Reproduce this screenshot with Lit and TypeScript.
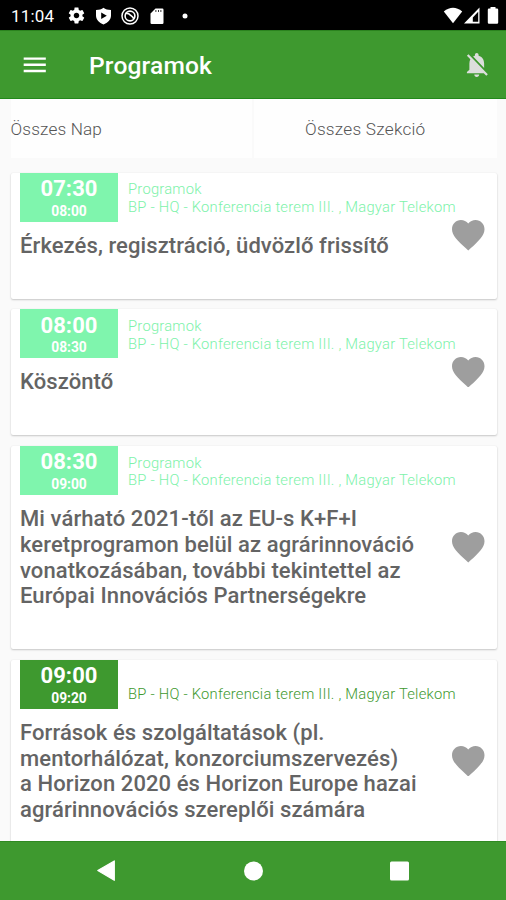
import { LitElement, html, css, nothing } from "lit";
import { customElement, property } from "lit/decorators.js";

interface Session {
  start: string;
  end: string;
  category?: string;
  place: string;
  lines: string[];
  past: boolean;
}

const PLACE = "BP - HQ - Konferencia terem III. , Magyar Telekom";

const SESSIONS: Session[] = [
  { start: "07:30", end: "08:00", category: "Programok", place: PLACE, past: true,
    lines: ["Érkezés, regisztráció, üdvözlő frissítő"] },
  { start: "08:00", end: "08:30", category: "Programok", place: PLACE, past: true,
    lines: ["Köszöntő"] },
  { start: "08:30", end: "09:00", category: "Programok", place: PLACE, past: true,
    lines: ["Mi várható 2021-től az EU-s K+F+I", "keretprogramon belül az agrárinnováció", "vonatkozásában, további tekintettel az", "Európai Innovációs Partnerségekre"] },
  { start: "09:00", end: "09:20", place: PLACE, past: false,
    lines: ["Források és szolgáltatások (pl.", "mentorhálózat, konzorciumszervezés)", "a Horizon 2020 és Horizon Europe hazai", "agrárinnovációs szereplői számára"] },
];

@customElement("status-bar")
class StatusBar extends LitElement {
  static styles = css`
    :host { display: flex; align-items: center; height: 30px; box-sizing: border-box; padding: 1px 7px 0 11px; background: #000; color: #fff; }
    .clock { width: 55.500px; font-size: 17px; line-height: 20px; letter-spacing: 0.2px; }
    .icons { display: flex; align-items: center; gap: 9.300px; }
    .spacer { flex: 1; }
    svg { display: block; fill: currentColor; }
    .signal { margin-left: 0.500px; }
    .battery { margin-left: 7.500px; }
  `;
  render() {
    return html`
      <span class="clock">11:04</span>
      <div class="icons">
        <svg width="19" height="19" viewBox="0 0 24 24"><path d="M19.43 12.98c.04-.32.07-.64.07-.98s-.03-.66-.07-.98l2.11-1.65c.19-.15.24-.42.12-.64l-2-3.46c-.12-.22-.39-.3-.61-.22l-2.49 1c-.52-.4-1.08-.73-1.69-.98l-.38-2.65C14.46 2.18 14.25 2 14 2h-4c-.25 0-.46.18-.49.42l-.38 2.65c-.61.25-1.17.59-1.69.98l-2.49-1c-.23-.09-.49 0-.61.22l-2 3.46c-.13.22-.07.49.12.64l2.11 1.65c-.04.32-.07.65-.07.98s.03.66.07.98l-2.11 1.65c-.19.15-.24.42-.12.64l2 3.46c.12.22.39.3.61.22l2.49-1c.52.4 1.08.73 1.69.98l.38 2.65c.03.24.24.42.49.42h4c.25 0 .46-.18.49-.42l.38-2.65c.61-.25 1.17-.59 1.69-.98l2.49 1c.23.09.49 0 .61-.22l2-3.46c.12-.22.07-.49-.12-.64l-2.11-1.65zM12 15.5c-1.93 0-3.5-1.57-3.5-3.5s1.57-3.5 3.5-3.5 3.5 1.57 3.5 3.5-1.57 3.5-3.5 3.5z"/></svg>
        <svg width="17" height="18" viewBox="0 0 17 18"><path fill-rule="evenodd" d="M8.500 .7C10.300 2.200 13 2.900 16 3V8.500C16 12.700 12.700 16 8.500 17.400 4.300 16 1 12.700 1 8.500V3C4 2.900 6.700 2.200 8.500 .7ZM6.200 5.600V12L11.800 8.800Z"/></svg>
        <svg width="18" height="18" viewBox="0 0 18 18"><g fill="none" stroke="currentColor"><circle cx="9" cy="9" r="8" stroke-width="1.500"/><circle cx="9" cy="9" r="4.900" stroke-width="1.600"/><path stroke-width="1.700" d="M4.500 6.500C7 5.800 8.200 6.800 9.200 8S11.800 9 12.800 12"/></g></svg>
        <svg width="18" height="18" viewBox="0 0 18 18"><path fill-rule="evenodd" d="M7.500 1.500H14.300Q15.500 1.500 15.500 2.700V15.800Q15.500 17 14.300 17H3.700Q2.500 17 2.500 15.800V6.500ZM7.500 3V5H8.300V3ZM10 3V5H10.800V3ZM12.500 3V5H13.300V3Z"/></svg>
        <svg width="18" height="18" viewBox="0 0 18 18"><circle cx="9" cy="9" r="2.500"/></svg>
      </div>
      <div class="spacer"></div>
      <svg width="20" height="17" viewBox="0 0 20 17"><path d="M.8 4.500Q10-3 19.200 4.500L10 16.200Z"/></svg>
      <svg class="signal" width="16" height="17" viewBox="0 0 16 17"><path fill-rule="evenodd" d="M15.500 .5V16.500H0ZM14.200 4.800V14.800H8.800V10.600Z"/></svg>
      <svg class="battery" width="12" height="17" viewBox="0 0 12 17"><path d="M3.500 0H8.500V1.600H10Q11.200 1.600 11.200 2.800V15.500Q11.200 16.700 10 16.700H2Q.8 16.700 .8 15.500V2.800Q.8 1.600 2 1.600H3.500Z"/></svg>
    `;
  }
}

@customElement("app-header")
class AppHeader extends LitElement {
  static styles = css`
    :host { display: flex; align-items: center; height: 69px; box-sizing: border-box; padding: 0 14.500px 0 20px; background: #3e992f; color: #fff; border-top: 1px solid #2b831f; border-bottom: 1px solid #22891b; }
    h1 { margin: 2px 0 0 39.500px; flex: 1; font-size: 24.600px; line-height: 30px; font-weight: 500; letter-spacing: 0.150px; }
    svg { display: block; width: 29.500px; height: 29.500px; fill: #fff; }
    .bell { fill: #dcdedc; }
  `;
  render() {
    return html`
      <svg viewBox="0 0 24 24"><path d="M3 18h18v-2H3v2zm0-5h18v-2H3v2zm0-7v2h18V6H3z"/></svg>
      <h1>Programok</h1>
      <svg class="bell" viewBox="0 0 24 24"><path d="M20 18.690L7.840 6.140 5.270 3.490 4 4.760l2.800 2.800v.01c-.52.99-.8 2.160-.8 3.420v5l-2 2v1h13.730l2 2L21 19.720l-1-1.030zM12 22c1.110 0 2-.89 2-2h-4c0 1.110.89 2 2 2zm6-7.320V11c0-3.080-1.640-5.640-4.500-6.320V4c0-.83-.67-1.500-1.500-1.500s-1.500.67-1.500 1.500v.68c-.15.03-.29.08-.42.12-.1.03-.2.07-.3.110h-.01c-.01 0-.01 0-.02.01-.23.09-.46.2-.68.310 0 0-.01 0-.01.010L18 14.680z"/></svg>
    `;
  }
}

@customElement("session-card")
class SessionCard extends LitElement {
  @property({ attribute: false }) session!: Session;
  static styles = css`
    :host { display: block; color: #3e992f; }
    .card { display: flex; align-items: center; justify-content: space-between; box-sizing: border-box; padding: 0 12.500px 0 9.500px; background: #fff; border-radius: 2px; box-shadow: 0 1px 2px rgba(0, 0, 0, 0.2), 0 0 2px rgba(0, 0, 0, 0.06); }
    .past { color: #7df2aa; }
    .main { padding-bottom: 40px; }
    .top { display: flex; gap: 10px; height: 49px; }
    .badge { display: flex; flex-direction: column; align-items: center; width: 98px; background: #3e992f; color: #fff; font-weight: 700; }
    .past .badge { background: #7ff5ad; }
    .start { font-size: 22px; line-height: 26px; padding-top: 3.500px; letter-spacing: 0.1px; }
    .end { font-size: 13.800px; line-height: 17px; padding-top: 0.800px; }
    .meta { display: flex; flex-direction: column; justify-content: flex-end; padding-bottom: 4.800px; font-size: 14.760px; line-height: 17.700px; font-weight: 300; letter-spacing: 0.235px; white-space: nowrap; width: 328px; }
    h2 { margin: 11.300px 0 0; font-size: 22px; line-height: 25.700px; font-weight: 500; letter-spacing: 0.090px; color: #646464; white-space: nowrap; }
    h2 span { display: block; }
    .heart { display: block; flex: none; width: 32.500px; height: 30.500px; fill: #9e9e9e; margin-left: -60px; }
  `;
  render() {
    const s = this.session;
    return html`
      <article class="card ${s.past ? "past" : ""}">
        <div class="main">
          <div class="top">
            <div class="badge"><span class="start">${s.start}</span><span class="end">${s.end}</span></div>
            <div class="meta">${s.category ? html`<span>${s.category}</span>` : nothing}<span>${s.place}</span></div>
          </div>
          <h2>${s.lines.map((l) => html`<span>${l}</span>`)}</h2>
        </div>
        <svg class="heart" viewBox="2 3 20 18.350" preserveAspectRatio="none"><path d="M12 21.350l-1.450-1.320C5.400 15.360 2 12.280 2 8.500 2 5.420 4.420 3 7.500 3c1.740 0 3.410.81 4.500 2.090C13.090 3.810 14.760 3 16.500 3 19.580 3 22 5.420 22 8.500c0 3.780-3.400 6.860-8.550 11.540L12 21.350z"/></svg>
      </article>
    `;
  }
}

@customElement("app-root")
class AppRoot extends LitElement {
  static styles = css`
    :host { display: flex; flex-direction: column; height: 900px; overflow: hidden; background: #fafafa; font-family: Roboto, "Noto Sans", sans-serif; }
    .filters { display: flex; flex: none; gap: 2px; height: 59px; margin: 0 9px 0 10.500px; font-size: 17.200px; line-height: 20px; font-weight: 300; color: #555; }
    .filter { box-sizing: border-box; padding-top: 20px; background: #fefefe; letter-spacing: 0.250px; }
    .day { width: 241.500px; letter-spacing: 0.150px; }
    .section { flex: 1; padding-left: 51px; }
    .list { flex: 1; min-height: 0; overflow: hidden; display: flex; flex-direction: column; gap: 10.700px; padding: 14.500px 9px 0 10.500px; }
    session-card { flex: none; }
    .nav { display: flex; flex: none; align-items: center; justify-content: space-between; height: 59px; box-sizing: border-box; padding: 0 96px; background: #3e992f; border-top: 1px solid #2f8a22; }
    .nav svg { display: block; fill: #fff; }
  `;
  render() {
    return html`
      <status-bar></status-bar>
      <app-header></app-header>
      <div class="filters">
        <div class="filter day">Összes Nap</div>
        <div class="filter section">Összes Szekció</div>
      </div>
      <div class="list">${SESSIONS.map((s) => html`<session-card .session=${s}></session-card>`)}</div>
      <nav class="nav">
        <svg width="22" height="22" viewBox="0 0 22 22"><path d="M1.800 10.600L18.300 .9V20.300Z" stroke="#fff" stroke-width="1.200" stroke-linejoin="round"/></svg>
        <svg width="20" height="20" viewBox="0 0 20 20"><circle cx="10.500" cy="10" r="9.500"/></svg>
        <svg width="22" height="20" viewBox="0 0 22 20"><rect x="2" y=".5" width="19" height="19" rx="1.500"/></svg>
      </nav>
    `;
  }
}
